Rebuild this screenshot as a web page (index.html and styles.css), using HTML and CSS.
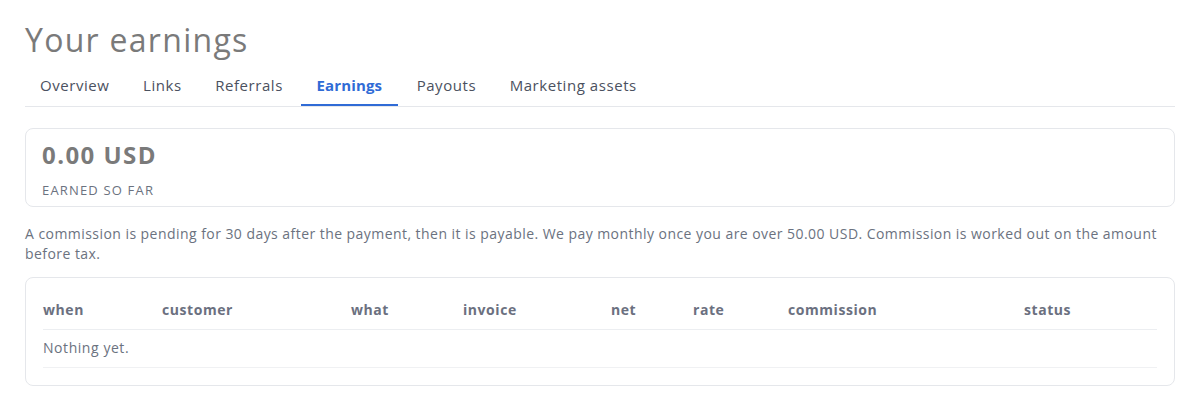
FILE: index.html
```html
<!DOCTYPE html>
<html lang="en">
<head>
<meta charset="utf-8">
<title>Your earnings</title>
<link rel="stylesheet" href="styles.css">
</head>
<body>
<main class="page">
  <h1 class="title">Your earnings</h1>
  <nav class="tabs">
    <a class="tab" href="#">Overview</a>
    <a class="tab" href="#">Links</a>
    <a class="tab" href="#">Referrals</a>
    <a class="tab tab-active" href="#">Earnings</a>
    <a class="tab" href="#">Payouts</a>
    <a class="tab" href="#">Marketing assets</a>
  </nav>
  <section class="card summary">
    <div class="amount">0.00 USD</div>
    <div class="amount-label">EARNED SO FAR</div>
  </section>
  <p class="note">A commission is pending for 30 days after the payment, then it is payable. We pay monthly once you are over 50.00 USD. Commission is worked out on the amount before tax.</p>
  <section class="card table-card">
    <table class="earnings">
      <colgroup>
        <col class="c-when"><col class="c-customer"><col class="c-what"><col class="c-invoice"><col class="c-net"><col class="c-rate"><col class="c-commission"><col class="c-status">
      </colgroup>
      <thead>
        <tr><th>when</th><th>customer</th><th>what</th><th>invoice</th><th>net</th><th>rate</th><th>commission</th><th>status</th></tr>
      </thead>
      <tbody>
        <tr><td colspan="8">Nothing yet.</td></tr>
      </tbody>
    </table>
  </section>
</main>
</body>
</html>
```

FILE: styles.css
```css
* { box-sizing: border-box; }
html, body { margin: 0; padding: 0; background: #ffffff; }
body {
  font-family: "Open Sans", "Liberation Sans", sans-serif;
  color: #6b7280;
  letter-spacing: 0.035em;
}
.page {
  padding: 20px 25px 0 25px;
  display: flex;
  flex-direction: column;
}
.title {
  margin: 0;
  font-size: 32px;
  line-height: 40px;
  font-weight: 400;
  color: #7a7a7a;
  letter-spacing: 0.04em;
}
.tabs {
  margin-top: 7px;
  display: flex;
  gap: 3.5px;
  border-bottom: 1px solid #e5e7eb;
}
.tab {
  padding: 8px 15px 9px 15px;
  font-size: 15px;
  line-height: 20px;
  color: #4b5160;
  text-decoration: none;
  border-bottom: 2px solid transparent;
}
.tab-active {
  padding: 8px 16px 9px 15px;
  color: #2f6bd6;
  font-weight: 700;
  border-bottom-color: #2f6bd6;
  letter-spacing: 0.01em;
}
.card {
  border: 1px solid #e5e7eb;
  border-radius: 8px;
  background: #fff;
}
.summary {
  margin-top: 21px;
  padding: 11px 16px 7px 16px;
}
.amount {
  font-size: 24px;
  line-height: 30px;
  font-weight: 700;
  color: #7a7a7a;
  letter-spacing: 0.06em;
}
.amount-label {
  margin-top: 11px;
  font-size: 13px;
  line-height: 18px;
  color: #6b7280;
  letter-spacing: 0.09em;
}
.note {
  margin: 17px 0 0 0;
  font-size: 14px;
  line-height: 20px;
  color: #6b7280;
  letter-spacing: 0.032em;
}
.table-card {
  margin-top: 13px;
  padding: 13px 17px 17px 17px;
}
.earnings {
  width: 100%;
  border-collapse: collapse;
  table-layout: fixed;
}
.c-when { width: 119px; }
.c-customer { width: 189px; }
.c-what { width: 112px; }
.c-invoice { width: 148px; }
.c-net { width: 82px; }
.c-rate { width: 95px; }
.c-commission { width: 236px; }
.earnings th {
  text-align: left;
  font-size: 14px;
  line-height: 20px;
  font-weight: 700;
  color: #6b7080;
  padding: 9px 0;
  border-bottom: 1px solid #eceef1;
}
.earnings td {
  font-size: 14px;
  line-height: 20px;
  color: #6b7280;
  padding: 8px 0 9px 0;
  border-bottom: 1px solid #f0f1f3;
}
```
